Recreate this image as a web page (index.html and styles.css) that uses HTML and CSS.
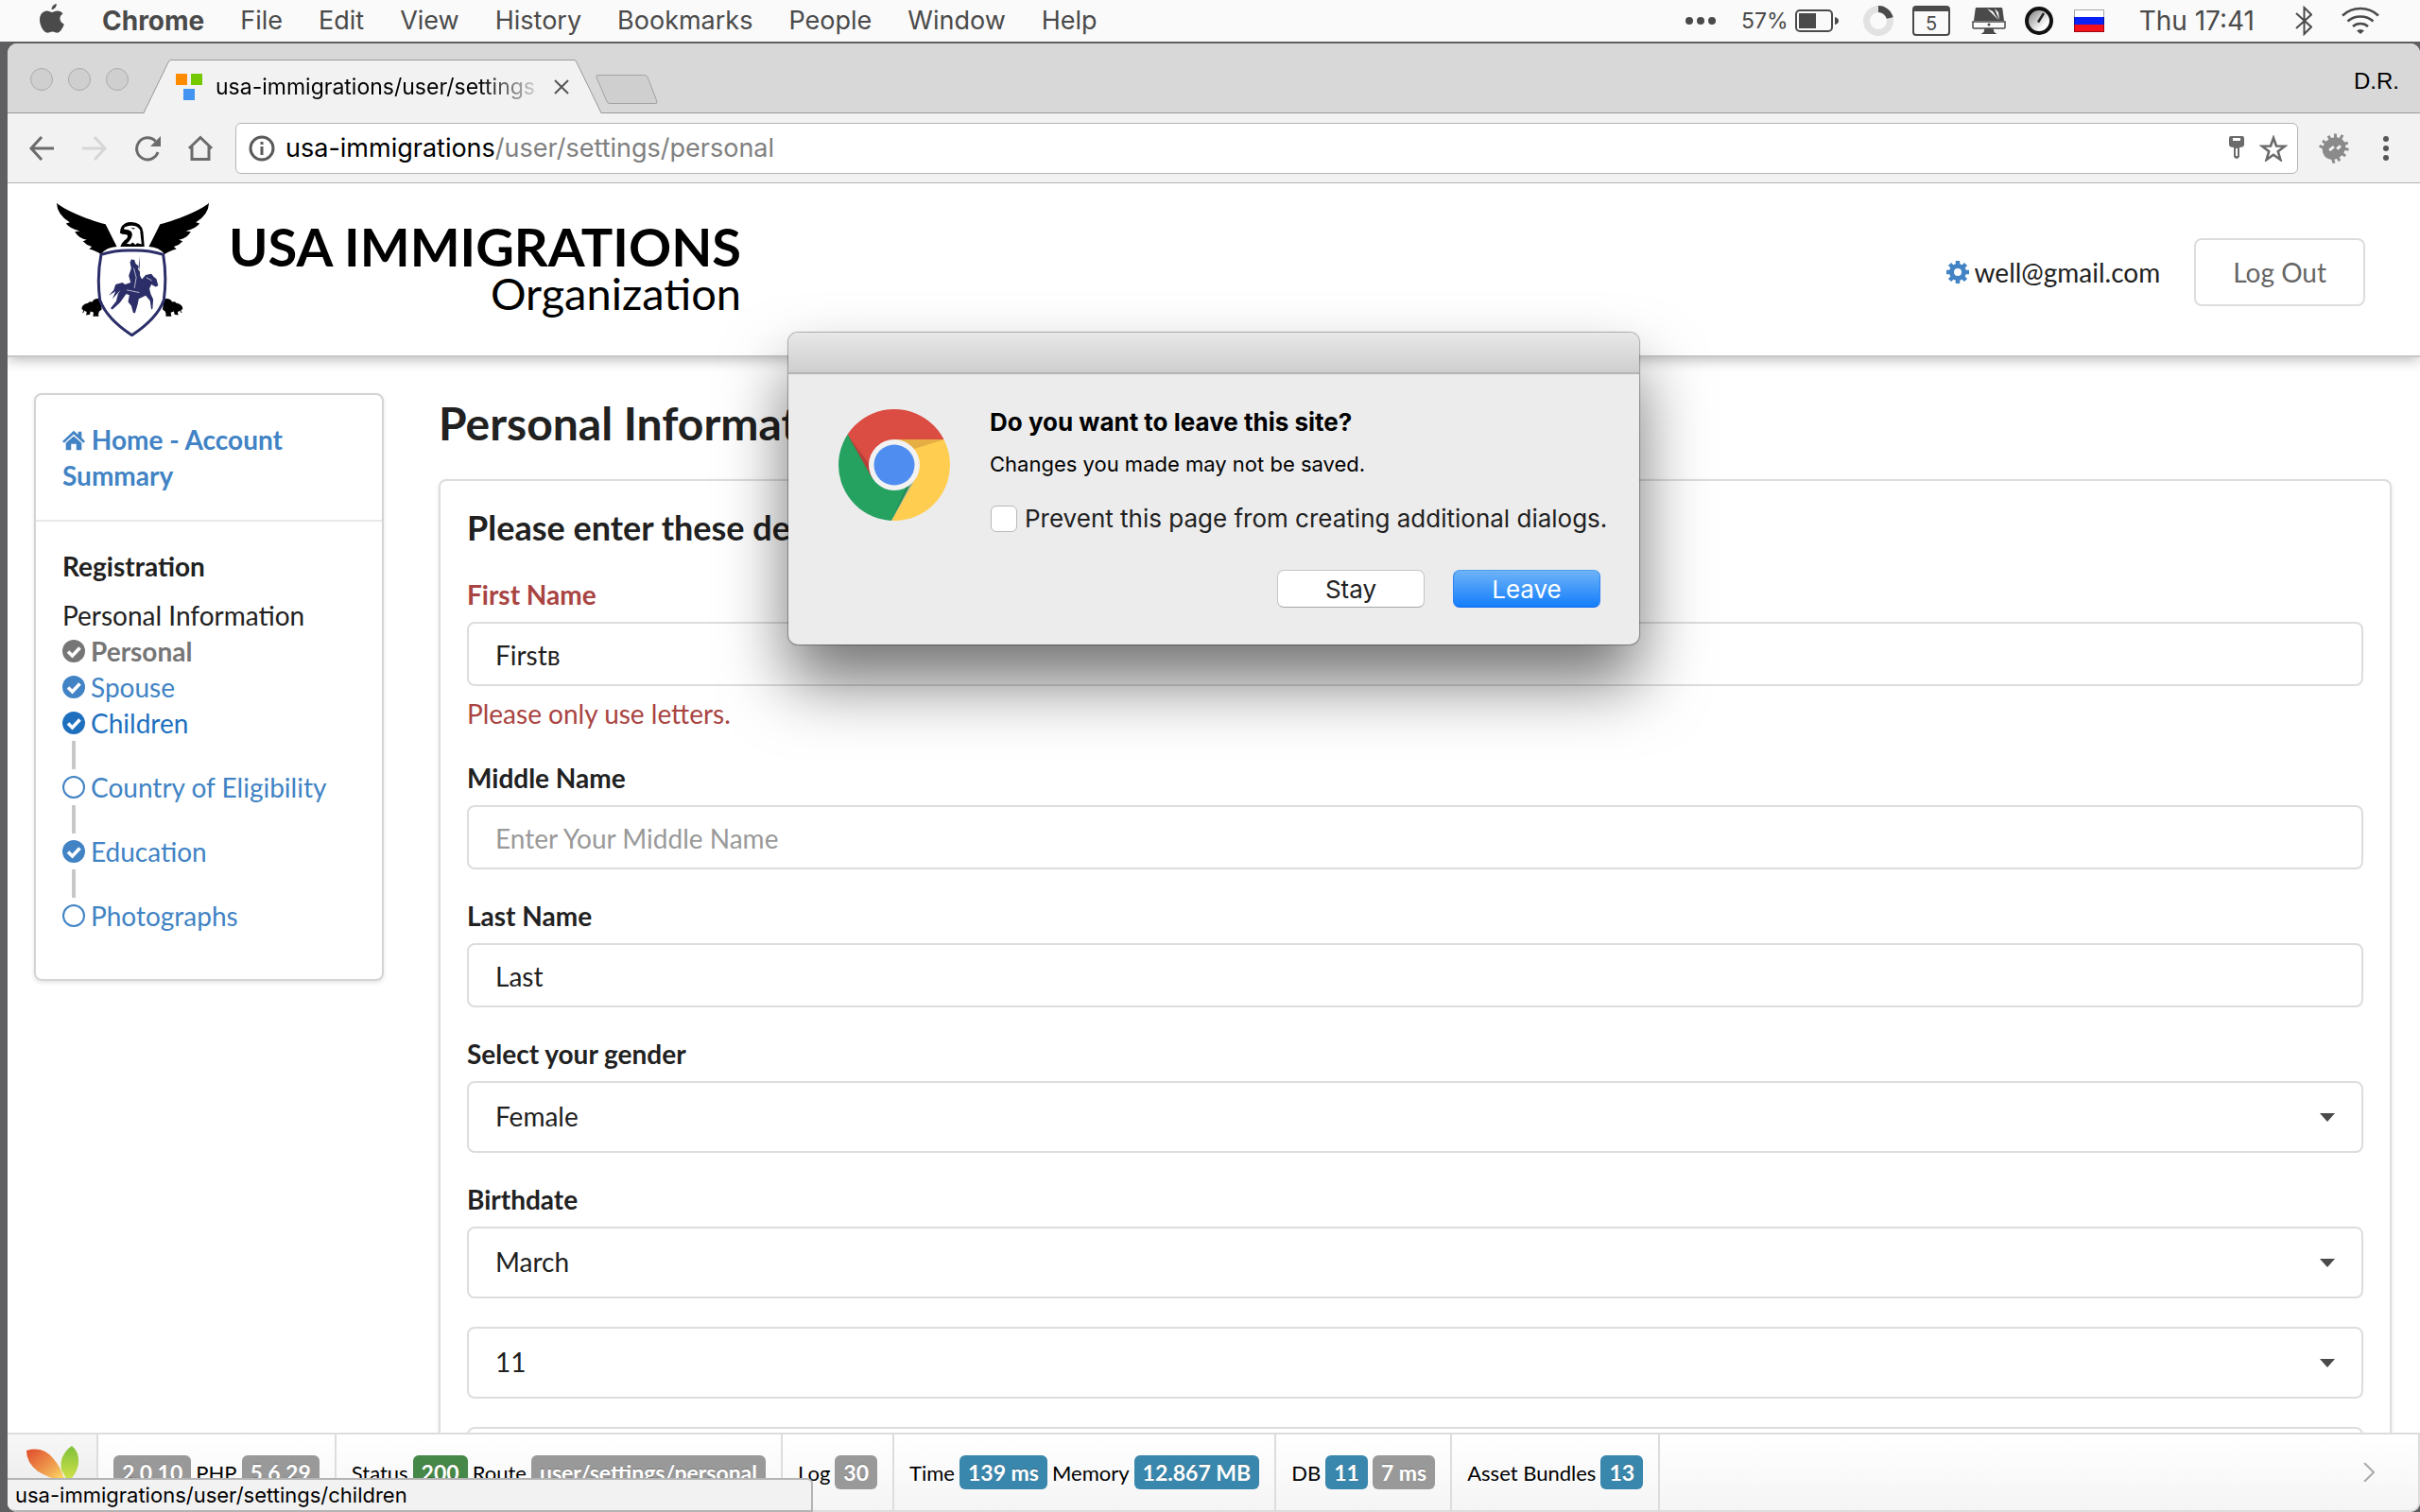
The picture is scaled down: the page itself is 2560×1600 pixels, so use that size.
FILE: index.html
```html
<!DOCTYPE html>
<html lang="en">
<head>
<meta charset="utf-8">
<title>usa-immigrations/user/settings/personal</title>
<link rel="stylesheet" href="styles.css">
</head>
<body>
<svg class="sprite" aria-hidden="true">
  <symbol id="check" viewBox="0 0 24 24"><circle cx="12" cy="12" r="12" fill="currentColor"/><path d="M6 12.500l4.500 4.500 8-8.500" fill="none" stroke="#fff" stroke-width="3.600"/></symbol>
  <symbol id="ring" viewBox="0 0 24 24"><circle cx="12" cy="12" r="11" fill="none" stroke="currentColor" stroke-width="2"/></symbol>
</svg>

<header class="menubar">
  <nav class="menus" aria-label="Application menu">
    <svg class="apple" viewBox="0 0 26 32" width="26" height="32"><path fill="#4a4a4a" d="M17.800 0c.3 2.800-2.400 6.200-5.200 6.200C12.200 3.400 15 .3 17.800 0zM13 9c1.300 0 3-1.500 5.800-1.500 2.300 0 4.500 1.200 5.700 3-4.600 2.700-3.900 9 1.300 11-.9 2.900-3.800 9-6.900 9.200-2 .1-2.900-1.300-5.400-1.300s-3.500 1.300-5.400 1.300C4.500 30.600 0 23.500 0 16.800 0 11 3.700 7.600 7.600 7.500 10 7.500 11.800 9 13 9z"/></svg>
    <strong>Chrome</strong><span>File</span><span>Edit</span><span>View</span><span>History</span><span>Bookmarks</span><span>People</span><span>Window</span><span>Help</span>
  </nav>
  <div class="tray">
    <svg class="t-dots" viewBox="0 0 32 8" width="32" height="8" fill="#4a4a4a"><circle cx="4" cy="4" r="4"/><circle cx="16" cy="4" r="4"/><circle cx="28" cy="4" r="4"/></svg>
    <span class="percent">57%</span>
    <svg class="t-batt" viewBox="0 0 46 24" width="46" height="24"><rect x="1" y="1" width="38" height="22" rx="4" fill="none" stroke="#4a4a4a" stroke-width="2"/><rect x="4" y="4" width="18" height="16" fill="#4a4a4a"/><path d="M42 8q4 1 4 4t-4 4z" fill="#4a4a4a"/></svg>
    <svg class="t-ring" viewBox="0 0 32 32" width="32" height="32"><circle cx="16" cy="16" r="12.500" fill="none" stroke="#e2e2e2" stroke-width="7"/><path d="M16 3.500A12.500 12.500 0 0 1 28.200 13" fill="none" stroke="#4a4a4a" stroke-width="7"/></svg>
    <svg class="t-cal" viewBox="0 0 40 32" width="40" height="32"><rect x="1" y="1" width="38" height="30" rx="3" fill="none" stroke="#4a4a4a" stroke-width="2"/><path d="M1 1h38v5H1z" fill="#4a4a4a"/><text x="20" y="26" text-anchor="middle" class="cal-day">5</text></svg>
    <svg class="t-mac" viewBox="0 0 36 30" width="36" height="30"><path d="M5 1h26q1 0 1.300 1L34 15H2L3.700 2Q4 1 5 1z" fill="#4a4a4a"/><path d="M1 16h34v6q0 1-1 1H2q-1 0-1-1z" fill="#fafafa" stroke="#4a4a4a" stroke-width="1.500"/><circle cx="18" cy="19" r="1.500" fill="#4a4a4a"/><path d="M13.500 23h9l1 4 3 2h-17l3-2z" fill="#4a4a4a"/><path d="M16 2l6 3 6 9-7-7zM24 2l4 4 1 8-3-7z" fill="#fff"/></svg>
    <svg class="t-dial" viewBox="0 0 30 30" width="30" height="30"><defs><linearGradient id="dg" x1="0" y1="0" x2="1" y2="1"><stop offset=".2" stop-color="#999"/><stop offset=".7" stop-color="#fff"/></linearGradient></defs><circle cx="15" cy="15" r="13" fill="url(#dg)" stroke="#111" stroke-width="4"/><path d="M14 16.500L20 7" stroke="#222" stroke-width="2.500"/></svg>
    <svg class="t-flag" viewBox="0 0 32 24" width="32" height="24"><path fill="#fff" d="M0 0h32v8H0z"/><path fill="#0a22f5" d="M0 8h32v8H0z"/><path fill="#f5101c" d="M0 16h32v8H0z"/><path d="M.5.5h31v23H.5z" fill="none" stroke="#000" stroke-opacity=".35"/></svg>
    <span class="clock">Thu 17:41</span>
    <svg class="t-bt" viewBox="0 0 18 32" width="18" height="32"><path d="M1 8l16 14.500L9.500 30V2L17 9.500 1 24" fill="none" stroke="#4a4a4a" stroke-width="2"/></svg>
    <svg viewBox="0 0 40 30" width="40" height="30" fill="none" stroke="#4a4a4a" stroke-width="2.500"><path d="M1 9.500Q9 2 20 2t19 7.500"/><path d="M6.500 15.500Q12 10.500 20 10.500t13.500 5"/><path d="M12 21q3-3 8-3t8 3"/><path d="M20 29l-4-3.500q4-3 8 0z" fill="#4a4a4a" stroke="none"/></svg>
  </div>
</header>

<main class="window">
  <div class="tabstrip">
    <div class="lights"><i></i><i></i><i></i></div>
    <div class="tab">
      <svg class="tab-shape" viewBox="0 0 484 57" preserveAspectRatio="none"><path d="M0 57L26 3q1-2.500 3-2.500h426q2 0 3 2.500l26 54z" fill="#f2f2f2"/><path d="M0 56.500L26 3q1-2.500 3-2.500h426q2 0 3 2.500l26 53.500" fill="none" stroke="#999"/></svg>
      <div class="tab-body">
        <svg viewBox="0 0 28 28" width="28" height="28"><path fill="#ff8c00" d="M0 0h12v12H0z"/><path fill="#73c800" d="M16 0h12v12H16z"/><path fill="#4294f0" d="M8 16h12v12H8z"/></svg>
        <span class="tab-title">usa-immigrations/user/settings</span>
        <button class="plain" aria-label="Close tab"><svg viewBox="0 0 16 16" width="16" height="16"><path d="M1 1l14 14M15 1L1 15" stroke="#555" stroke-width="2"/></svg></button>
      </div>
    </div>
    <button class="plain newtab" aria-label="New tab"><svg viewBox="0 0 66 32" width="66" height="32"><path d="M3 .5h49q2 0 3 2l10 26q1 2-2 2H15q-2 0-3-2L1 3Q0 .5 3 .5z" fill="#cfcfcf" stroke="#a2a2a2"/></svg></button>
    <span class="profile">D.R.</span>
  </div>
  <div class="toolbar">
    <button class="plain" aria-label="Back"><svg viewBox="0 0 28 28" width="28" height="28" fill="none" stroke="#6b6b6b" stroke-width="3"><path d="M14 2L3 14l11 12M3 14h24"/></svg></button>
    <button class="plain" aria-label="Forward"><svg viewBox="0 0 28 28" width="28" height="28" fill="none" stroke="#d6d6d6" stroke-width="3"><path d="M14 2l11 12-11 12M25 14H1"/></svg></button>
    <button class="plain" aria-label="Reload"><svg viewBox="0 0 28 28" width="28" height="28"><path d="M22.500 6.500A11.500 11.500 0 1 0 25 18" fill="none" stroke="#6b6b6b" stroke-width="3"/><path d="M28 1v11H17z" fill="#6b6b6b"/></svg></button>
    <button class="plain" aria-label="Home"><svg viewBox="0 0 28 28" width="28" height="28" fill="none" stroke="#6b6b6b" stroke-width="3"><path d="M2 14L14 2.500 26 14M5 12v13.500h18V12"/></svg></button>
    <div class="omnibox">
      <svg viewBox="0 0 28 28" width="28" height="28"><circle cx="14" cy="14" r="12" fill="none" stroke="#5a5a5a" stroke-width="3"/><path d="M12.500 7h3v3h-3zM12.500 12h3v9h-3z" fill="#5a5a5a"/></svg>
      <div class="url" role="textbox" aria-label="Address">usa-immigrations<span>/user/settings/personal</span></div>
      <svg viewBox="0 0 16 25" width="16" height="25"><path fill="#6b6b6b" fill-rule="evenodd" d="M2 0h12q2 0 2 2v7q0 3-5 3v10q-3 4-6 0V12q-5 0-5-3V2q0-2 2-2zm2 2v3h8V2zM7 13v8h2v-8z"/></svg>
      <svg viewBox="0 0 30 28" width="30" height="28"><path d="M15 3l3 8.500 9 .2-7.200 5.600 2.600 8.700-7.400-5.200L7.600 26l2.600-8.700L3 11.700l9-.2z" fill="none" stroke="#6b6b6b" stroke-width="2.600"/></svg>
    </div>
    <button class="plain ext" aria-label="Extension"><svg viewBox="0 0 32 32" width="32" height="32"><g transform="rotate(-40 16 16)"><ellipse cx="16" cy="16" rx="13" ry="11" fill="#8a8a8a"/><path d="M8 9L6 4M13 7l-1-5M19 7l1-5M24 9l3-4M8 23l-2 5M13 25l-1 5M19 25l1 5M24 23l3 4M27 13l5-2M27 19l4 2" stroke="#8a8a8a" stroke-width="3"/><path d="M11 13h6v3h-6zM18 17h5v3h-5z" fill="#f2f2f2"/></g></svg></button>
    <button class="plain" aria-label="Menu"><svg viewBox="0 0 6 28" width="6" height="28" fill="#555"><circle cx="3" cy="4" r="3"/><circle cx="3" cy="14" r="3"/><circle cx="3" cy="24" r="3"/></svg></button>
  </div>

  <div class="page">
    <header class="site-head">
      <a class="logo" href="#">
        <svg viewBox="28 26 490 428" width="163" height="142">
          <g id="wing"><path d="M30 28C55 50 120 78 186 96L222 168q-34 2-50 24-22-14-38-16l8-8q-18-6-28-18l12-4q-24-4-38-26l16-2q-32-8-44-24l12-4Q32 66 30 28z"/></g>
          <use href="#wing" transform="translate(546) scale(-1 1)"/>
          <path d="M233 168q4-14 18-24 8-6 4-14-20-2-23-6 0-14 6-22 12-14 30-13 34 0 38 32l4 47z"/>
          <path d="M250 104q32-10 46 10l5 46-14-4-6 6-8-8-8 6-12-2q18-14 18-30-2-12-14-14l-12-2q-2-6 5-8z" fill="#fff"/><path d="M266 107l14 2-4 4z"/>
          <path id="claw" d="M170 334q-22-4-26 10-10-2-14 4-20 4-20 18l6 6-4 6q6 2 6-6l8 4-2 10 12-2 2-10 10 4-2 12h18q-2-10 2-16l8-6z"/>
          <use href="#claw" transform="translate(542) scale(-1 1)"/>
          <path d="M172 193Q220 178 270 180q52-2 100 13 12 70 2 145-22 60-102 112-80-52-102-112-10-75 4-145z" fill="#fff" stroke="#2b2e68" stroke-width="9"/>
          <path d="M294 198l2 62 6 12 12-14 18-4 8 10 8 6 6 22-8 4-14-8-6 14 4 16 8 18-2 30-4 2-4-28-14-16-22 10-4 20-8 26-6-2-6-22-10-12 4-22-10-4-20 28-24 22-6-4 18-22 6-24 8-12-26 28 10-24-22 14 16-18 6-18 22-6 8 6 18-6-6-22 8-24-4-18 4-10 10 2 4 12 10 8-2 10 6 8-4-22z" fill="#2b2e68"/><path d="M276 236l8 30-6 34M254 306l40 8M316 266l18 10" stroke="#fff" stroke-width="2" fill="none"/>
        </svg>
        <span class="wordmark"><b>USA IMMIGRATIONS</b><span>Organization</span></span>
      </a>
      <div class="account">
        <a class="mail" href="#"><svg viewBox="0 0 24 24" width="24" height="24"><circle cx="12" cy="12" r="6.500" fill="none" stroke="#4183c4" stroke-width="5"/><path d="M12 0v4M12 20v4M0 12h4M20 12h4M3.500 3.500l3 3M17.500 17.500l3 3M3.500 20.500l3-3M17.500 6.500l3-3" stroke="#4183c4" stroke-width="4.500"/></svg>well@gmail.com</a>
        <button class="logout">Log Out</button>
      </div>
    </header>

    <div class="columns">
      <aside class="side">
        <a class="home" href="#"><svg viewBox="0 0 26 24" width="24" height="24" fill="#4183c4"><path d="M13 1L0 13l2 2L13 5l11 10 2-2-4-4V2h-4v3.500z"/><path d="M13 7l9 8v8h-6v-7h-6v7H4v-8z"/></svg> Home - Account Summary</a>
        <nav class="steps" aria-label="Registration">
          <h2>Registration</h2>
          <p>Personal Information</p>
          <a class="step current" href="#"><svg><use href="#check"/></svg>Personal</a>
          <a class="step" href="#"><svg><use href="#check"/></svg>Spouse</a>
          <a class="step hover" href="#"><svg><use href="#check"/></svg>Children</a>
          <a class="step linked" href="#"><svg><use href="#ring"/></svg>Country of Eligibility</a>
          <a class="step linked" href="#"><svg><use href="#check"/></svg>Education</a>
          <a class="step linked" href="#"><svg><use href="#ring"/></svg>Photographs</a>
        </nav>
      </aside>
      <section class="content">
        <h1>Personal Information</h1>
        <form class="panel">
          <h3>Please enter these details</h3>
          <div class="field error"><label for="first">First Name</label><input id="first" type="text" value="Firstв"><p class="help">Please only use letters.</p></div>
          <div class="field"><label for="middle">Middle Name</label><input id="middle" type="text" placeholder="Enter Your Middle Name"></div>
          <div class="field"><label for="last">Last Name</label><input id="last" type="text" value="Last"></div>
          <div class="field"><label for="gender">Select your gender</label><div class="select"><select id="gender"><option>Female</option></select></div></div>
          <div class="field"><label for="month">Birthdate</label><div class="select"><select id="month"><option>March</option></select></div></div>
          <div class="field"><div class="select"><select aria-label="Day"><option>11</option></select></div></div>
          <div class="field"><div class="select"><select aria-label="Year"><option></option></select></div></div>
        </form>
      </section>
    </div>
  </div>

  <footer class="debug">
    <a class="cell yii" href="#"><svg viewBox="0 0 56 60" width="56" height="60"><defs><linearGradient id="yo" x1="0" y1="0" x2="1" y2="1"><stop stop-color="#e04a2b"/><stop offset=".6" stop-color="#f0a050"/><stop offset="1" stop-color="#ffe86a"/></linearGradient><linearGradient id="yg" x1="0" y1="0" x2="0" y2="1"><stop stop-color="#7fbf3a"/><stop offset="1" stop-color="#d9e64a"/></linearGradient></defs><path d="M0 5q17-5 28 8 8 9 12 22v4Q24 34 12 27 0 18 0 5z" fill="url(#yo)"/><path d="M48 0q8 6 7 19-2 12-12 20-2-8-6-13Q34 10 48 0z" fill="url(#yg)"/><path d="M30 35l8 4v18q-8-8-8-22z" fill="#4ba3d3"/></svg></a>
    <div class="cell"><b>2.0.10</b>PHP<b>5.6.29</b></div>
    <div class="cell">Status<b class="green">200</b>Route<b>user/settings/personal</b></div>
    <div class="cell">Log<b>30</b></div>
    <div class="cell">Time<b class="blue">139 ms</b>Memory<b class="blue">12.867 MB</b></div>
    <div class="cell">DB<b class="blue">11</b><b>7 ms</b></div>
    <div class="cell">Asset Bundles<b class="blue">13</b></div>
    <button class="plain collapse" aria-label="Hide toolbar"><svg viewBox="0 0 12 20" width="12" height="20"><path d="M1 0l10 10L1 20" fill="none" stroke="#aaa" stroke-width="2"/></svg></button>
  </footer>

  <div class="bubble">usa-immigrations/user/settings/children</div>

  <div class="dialog" role="alertdialog" aria-labelledby="dlg-title">
    <div class="dialog-bar"></div>
    <div class="dialog-body">
      <svg viewBox="0 0 118 118" width="118" height="118">
        <clipPath id="disc"><circle cx="59" cy="59" r="59"/></clipPath>
        <g clip-path="url(#disc)">
          <path d="M0 0h118v32H59L36 74 8 24z" fill="#db4c42"/>
          <path d="M0 10l10 17 26 46 23 12 20-12-23 45H0z" fill="#25a160"/>
          <path d="M59 32h59v86H56l26-46z" fill="#ffcd50"/>
          <path d="M59 32h53L80 42z" fill="#d59a3a" opacity=".6"/>
          <path d="M10 28l26 46-2-14z" fill="#9e3a32" opacity=".6"/>
          <path d="M82 72l-26 46 16-36z" fill="#146b3c" opacity=".5"/>
        </g>
        <circle cx="59" cy="59" r="27" fill="#f2f2f2"/><circle cx="59" cy="59" r="21.500" fill="#4f8df0"/>
      </svg>
      <div class="dialog-text">
        <h2 id="dlg-title">Do you want to leave this site?</h2>
        <p>Changes you made may not be saved.</p>
        <label><input type="checkbox">Prevent this page from creating additional dialogs.</label>
        <div class="dialog-actions"><button>Stay</button><button class="primary">Leave</button></div>
      </div>
    </div>
  </div>
</main>
</body>
</html>
```
FILE: styles.css
```css
* { box-sizing: border-box; }
body {
  margin: 0;
  height: 100vh;
  display: flex;
  flex-direction: column;
  overflow: hidden;
  background: #5f5f61;
  font-family: Inter, "Liberation Sans", sans-serif;
  color: #000;
}
h1, h2, h3, p { margin: 0; }
a { text-decoration: none; }
svg { display: block; flex: none; }
button, input, select { font: inherit; }
.sprite { position: absolute; width: 0; height: 0; }
.plain { padding: 0; border: 0; background: none; }

/* system menu bar */
.menubar {
  flex: none;
  height: 44px;
  padding: 0 43px 0 42px;
  display: flex;
  justify-content: space-between;
  align-items: center;
  background: #fafafa;
  color: #4a4a4a;
  font-size: 27px;
  line-height: 44px;
}
.menus { display: flex; align-items: center; gap: 38px; }
.menus strong { font-size: 28px; }
.menus .apple { margin: 0 2px 4px 0; }
.tray { display: flex; align-items: center; }
.percent { margin-left: 27px; font-size: 23px; }
.t-batt { margin-left: 7px; }
.t-ring { margin-left: 26px; }
.t-cal { margin-left: 20px; }
.t-mac { margin-left: 23px; }
.t-dial { margin-left: 20px; }
.t-flag { margin-left: 22px; }
.clock { margin-left: 37px; font-size: 28px; }
.t-bt { margin: 0 31px 0 43px; }
.cal-day { font-size: 20px; fill: #4a4a4a; }

/* browser window */
.window {
  position: relative;
  flex: 1;
  min-height: 0;
  margin: 2px 0 0 8px;
  display: flex;
  flex-direction: column;
  overflow: hidden;
  border-radius: 10px;
  background: #fff;
}
.tabstrip {
  flex: none;
  height: 74px;
  padding: 0 22px 0 24px;
  display: flex;
  background: #d8d8d8;
  border-bottom: 1px solid #999;
}
.lights { display: flex; gap: 16px; padding-top: 26px; }
.lights i { width: 24px; height: 24px; border: 1px solid #ababab; border-radius: 50%; background: #cfcfcf; }
.tab { display: grid; width: 484px; height: 57px; margin: 17px 0 0 16px; }
.tab-shape, .tab-body { grid-area: 1 / 1; width: 100%; height: 57px; }
.tab-body { display: flex; align-items: center; gap: 14px; padding: 0 34px; }
.tab-title {
  flex: 1;
  margin-right: -4px;
  overflow: hidden;
  white-space: nowrap;
  font-size: 23px;
  -webkit-mask-image: linear-gradient(90deg, #000 80%, transparent);
  mask-image: linear-gradient(90deg, #000 80%, transparent);
}
.newtab { align-self: flex-start; margin: 33px 0 0 -6px; }
.profile { margin: 24px 0 0 auto; font: 24px/32px "Liberation Sans", sans-serif; }

.toolbar {
  flex: none;
  height: 74px;
  padding: 0 33px 0 22px;
  display: flex;
  align-items: center;
  gap: 28px;
  background: #f2f2f2;
  border-bottom: 1px solid #b4b4b4;
}
.omnibox {
  flex: 1;
  height: 54px;
  margin-left: -5px;
  padding: 0 10px 0 13px;
  display: flex;
  align-items: center;
  gap: 16px;
  background: #fff;
  border: 1px solid #b4b4b4;
  border-radius: 6px;
}
.url { flex: 1; margin-left: -5px; font-size: 27px; white-space: nowrap; }
.url span { color: #808080; }
.ext { margin: 0 8px 0 -6px; }

/* site */
.page {
  flex: 1;
  min-height: 0;
  overflow: hidden;
  font-family: Lato, "Noto Sans", sans-serif;
  font-size: 28px;
  line-height: 38px;
  color: #212121;
}
.site-head {
  position: relative;
  height: 184px;
  padding: 0 58px 0 51px;
  display: flex;
  justify-content: space-between;
  align-items: center;
  background: #fff;
  border-bottom: 2px solid #c8c8c8;
  box-shadow: 0 2px 14px rgba(0, 0, 0, .3);
}
.logo { display: flex; align-items: center; gap: 20px; color: #000; }
.wordmark { display: flex; flex-direction: column; align-items: flex-end; }
.wordmark b { font-size: 56px; line-height: 50px; }
.wordmark span { font-size: 47px; line-height: 48px; }
.account { display: flex; align-items: center; gap: 36px; padding-top: 6px; }
.mail { display: flex; align-items: center; gap: 6px; color: #212121; }
.logout {
  height: 72px;
  padding: 0 39px;
  border: 2px solid #ddd;
  border-radius: 8px;
  background: #fff;
  color: #666;
}

.columns { display: flex; align-items: flex-start; gap: 58px; padding: 38px 30px 0 28px; }
.side {
  flex: none;
  width: 370px;
  border: 2px solid #d4d4d5;
  border-radius: 8px;
  box-shadow: 0 2px 4px rgba(34, 36, 38, .12);
}
.home {
  display: block;
  padding: 28px;
  border-bottom: 2px solid #e8e8e8;
  color: #4183c4;
  font-weight: 700;
}
.home svg { display: inline-block; vertical-align: -2px; }
.steps { display: flex; flex-direction: column; padding: 28px 28px 48px; }
.steps h2 { margin-bottom: 14px; font-size: 28px; line-height: 38px; }
.step {
  display: grid;
  grid-template-columns: 24px 1fr;
  align-items: center;
  column-gap: 6px;
  color: #4183c4;
}
.step svg { width: 24px; height: 24px; }
.current { color: #767676; font-weight: 700; }
.hover { color: #1e70bf; }
.linked::before { content: ""; grid-column: 1 / -1; width: 4px; height: 30px; margin-left: 10px; background: #c8c8c8; }

.content { flex: 1; min-width: 0; }
h1 { margin-bottom: 27px; font-size: 48px; line-height: 64px; }
.panel {
  padding: 28px;
  border: 2px solid #ddd;
  border-radius: 8px;
  box-shadow: 0 2px 4px rgba(34, 36, 38, .12);
}
.panel h3 { margin-bottom: 31px; font-size: 36px; line-height: 42px; }
.field { margin-bottom: 30px; }
.field label { display: block; margin-bottom: 10px; font-weight: 700; }
.field input, .field select {
  display: block;
  width: 100%;
  height: 68px;
  padding: 0 28px;
  border: 2px solid #ddd;
  border-radius: 8px;
  background: #fff;
  color: #212121;
}
.field input { padding-top: 2px; }
.field input::placeholder { color: #999; opacity: 1; }
.field select { grid-area: 1 / 1; height: 76px; padding-bottom: 2px; appearance: none; }
.select { display: grid; align-items: center; }
.select::after {
  content: "";
  grid-area: 1 / 1;
  justify-self: end;
  margin-right: 30px;
  border: 8px solid transparent;
  border-top: 9px solid #4a4a4a;
  border-bottom: 0;
}
.help { margin-top: 10px; }
.error label, .help { color: #a94442; }

/* debug toolbar */
.debug {
  flex: none;
  height: 84px;
  display: flex;
  border: 2px solid #ddd;
  border-left: 0;
  border-bottom-right-radius: 10px;
  background: linear-gradient(#fff, #f5f5f5);
  font-family: Lato, "Noto Sans", sans-serif;
  font-size: 22px;
}
.cell { display: flex; align-items: center; gap: 5px; padding: 0 16px; border-right: 2px solid #ddd; white-space: nowrap; }
.yii { align-items: flex-start; padding: 12px 18px 0 20px; background: linear-gradient(#f7f7f7, #e8e8e8); }
.cell b {
  padding: 0 9px;
  border-radius: 6px;
  background: #999;
  color: #fff;
  font-size: 23px;
  font-weight: 700;
  line-height: 36px;
  text-shadow: 0 -1px 0 rgba(0, 0, 0, .25);
}
.cell .green { background: #468847; }
.cell .blue { background: #3a87ad; }
.collapse { margin: 0 46px 0 auto; }

/* link target shown in the corner */
.bubble {
  position: absolute;
  left: 0;
  bottom: 0;
  width: 852px;
  height: 36px;
  padding: 0 8px;
  border: 2px solid #b4b4b4;
  border-left: 0;
  border-radius: 0 6px 0 8px;
  background: #f2f2f2;
  font-size: 22px;
  line-height: 32px;
}

/* leave-page dialog */
.dialog {
  position: absolute;
  top: 306px;
  left: 50%;
  width: 900px;
  margin-left: -450px;
  border-radius: 10px;
  background: #ececec;
  box-shadow: 0 0 1px 1px rgba(0, 0, 0, .3), 0 40px 70px rgba(0, 0, 0, .55);
}
.dialog-bar {
  height: 44px;
  border-bottom: 2px solid #b4b4b4;
  border-radius: 10px 10px 0 0;
  background: linear-gradient(#e8e8e8, #cecece);
}
.dialog-body { display: flex; gap: 42px; padding: 37px 41px 39px 53px; }
.dialog-text { flex: 1; min-width: 0; white-space: nowrap; }
.dialog h2 { font-size: 26px; line-height: 28px; }
.dialog p { margin-top: 14px; font-size: 22px; line-height: 32px; }
.dialog label { display: flex; align-items: center; gap: 8px; margin-top: 26px; color: #212121; font-size: 26px; line-height: 32px; }
.dialog input {
  appearance: none;
  flex: none;
  width: 28px;
  height: 28px;
  margin: 0 0 0 1px;
  border: 1px solid #b8b8b8;
  border-radius: 6px;
  background: #fff;
}
.dialog-actions { display: flex; justify-content: flex-end; gap: 30px; margin-top: 38px; }
.dialog-actions button {
  width: 156px;
  height: 40px;
  padding: 0;
  border: 1px solid #c4c4c4;
  border-bottom-color: #a8a8a8;
  border-radius: 7px;
  background: #fff;
  color: #212121;
  font-size: 26px;
}
.dialog-actions .primary { border-color: #4a9cf0 #2a84f5 #0f68ee; background: linear-gradient(#6db3f8, #147efb); color: #fff; }
```
